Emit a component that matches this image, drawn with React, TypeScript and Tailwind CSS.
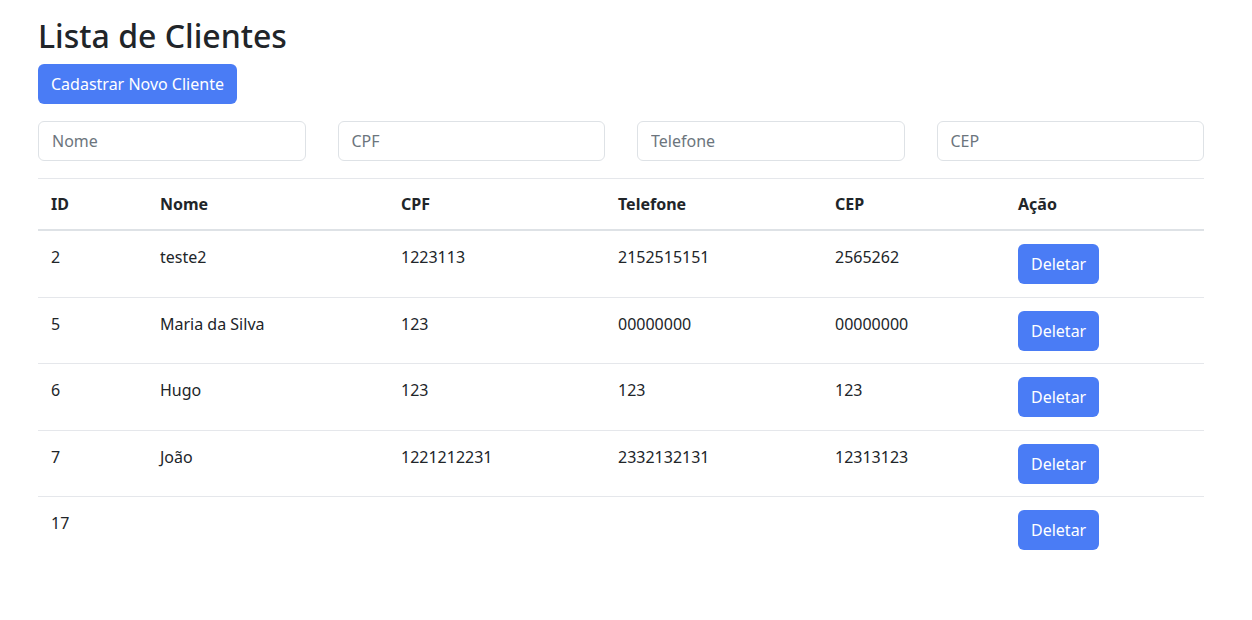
import React from 'react';

const clientes = [
  { id: 2, nome: 'teste2', cpf: '1223113', telefone: '2152515151', cep: '2565262' },
  { id: 5, nome: 'Maria da Silva', cpf: '123', telefone: '00000000', cep: '00000000' },
  { id: 6, nome: 'Hugo', cpf: '123', telefone: '123', cep: '123' },
  { id: 7, nome: 'João', cpf: '1221212231', telefone: '2332132131', cep: '12313123' },
  { id: 17, nome: '', cpf: '', telefone: '', cep: '' },
];

const cols = ['w-[109px]', 'w-[241px]', 'w-[217px]', 'w-[217px]', 'w-[183px]', 'w-[199px]'];

export default function App() {
  return (
    <div className="min-h-screen bg-white text-[#212529] font-['Segoe_UI','Noto_Sans',sans-serif]">
      <div className="pl-[38px] pr-[48px] pt-[17px]">
        <h1 className="text-[32px] font-medium leading-[38px]">Lista de Clientes</h1>
        <button className="mt-[9px] h-10 px-[13px] rounded-md bg-[#4a7cf5] text-white text-base">
          Cadastrar Novo Cliente
        </button>

        <div className="mt-[17px] grid grid-cols-4 gap-x-8">
          {['Nome', 'CPF', 'Telefone', 'CEP'].map((p) => (
            <input
              key={p}
              placeholder={p}
              className="h-10 w-full rounded-md border border-[#dee2e6] px-[13px] text-base placeholder:text-[#6c757d] outline-none"
            />
          ))}
        </div>

        <table className="mt-[17px] w-full table-fixed border-collapse text-left">
          <thead>
            <tr className="border-t border-[#e5e7eb] border-b-2 border-b-[#dee2e6]">
              {['ID', 'Nome', 'CPF', 'Telefone', 'CEP', 'Ação'].map((h, i) => (
                <th key={h} className={`${cols[i]} px-[13px] py-[13px] font-bold leading-6`}>
                  {h}
                </th>
              ))}
            </tr>
          </thead>
          <tbody>
            {clientes.map((c, idx) => (
              <tr key={c.id} className={idx < clientes.length - 1 ? 'border-b border-[#e5e7eb]' : ''}>
                <td className="px-[13px] pt-[14px] pb-[12.5px] align-top leading-6">{c.id}</td>
                <td className="px-[13px] pt-[14px] pb-[12.5px] align-top leading-6">{c.nome}</td>
                <td className="px-[13px] pt-[14px] pb-[12.5px] align-top leading-6">{c.cpf}</td>
                <td className="px-[13px] pt-[14px] pb-[12.5px] align-top leading-6">{c.telefone}</td>
                <td className="px-[13px] pt-[14px] pb-[12.5px] align-top leading-6">{c.cep}</td>
                <td className="px-[13px] pt-[13px] pb-[12.5px] align-top">
                  <button className="h-10 px-[13px] rounded-md bg-[#4a7cf5] text-white text-base">
                    Deletar
                  </button>
                </td>
              </tr>
            ))}
          </tbody>
        </table>
      </div>
    </div>
  );
}
